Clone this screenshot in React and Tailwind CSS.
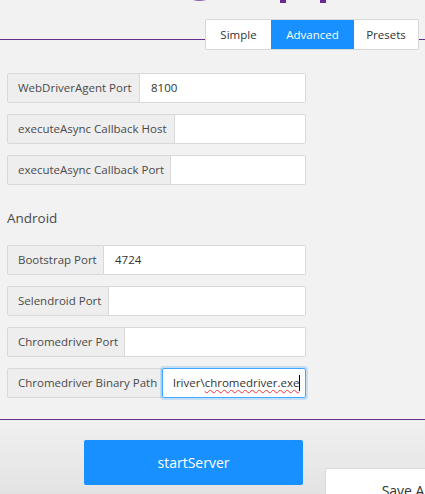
import React from 'react';

// Pestañas de modo
const tabs = [
  { name: 'Simple', w: 'w-[65px]', active: false },
  { name: 'Advanced', w: 'w-[83px]', active: true },
  { name: 'Presets', w: 'w-[64px]', active: false },
];

const iosRows = [
  { label: 'WebDriverAgent Port', w: 'w-[133px]', value: '8100' },
  { label: 'executeAsync Callback Host', w: 'w-[168px]', value: '' },
  { label: 'executeAsync Callback Port', w: 'w-[164px]', value: '' },
];

const androidRows = [
  { label: 'Bootstrap Port', w: 'w-[97px]', value: '4724' },
  { label: 'Selendroid Port', w: 'w-[102px]', value: '' },
  { label: 'Chromedriver Port', w: 'w-[118px]', value: '' },
];

const Row = ({ label, w, value }) => (
  <div className="flex h-[30px] w-[299px]">
    <div className={`${w} shrink-0 flex items-center px-[10px] bg-[#eeeeee] border border-[#d9d9d9] rounded-l-[2px] text-[#4a4a4a] whitespace-nowrap`}>
      {label}
    </div>
    <div className="flex-1 flex items-center px-[11px] bg-white border border-l-0 border-[#d9d9d9] rounded-r-[2px] text-[#333]">
      {value}
    </div>
  </div>
);

export default function App() {
  return (
    <div className="relative w-[425px] h-[494px] overflow-hidden bg-[#f2f2f2] font-['Open_Sans',sans-serif] text-[11.5px]">
      {/* restos del logo */}
      <svg className="absolute top-0 left-0" width="425" height="4" viewBox="0 0 425 4">
        <path d="M193 0 Q199 2.2 206 0 Z" fill="#8a5bb3" />
        <rect x="280" y="0" width="6" height="3" fill="#662d91" />
        <rect x="320" y="0" width="6" height="3" fill="#662d91" />
      </svg>

      <div className="h-[40px] border-b border-[#662d91]" />
      <div className="flex justify-end pr-[6px] -mt-[21px]">
        <div className="flex h-[31px] border border-[#d9d9d9] rounded-[2px] bg-white">
          {tabs.map((t) => (
            <div
              key={t.name}
              className={`${t.w} flex items-center justify-center ${t.active ? 'bg-[#1890ff] text-white' : 'text-[#333]'}`}
            >
              {t.name}
            </div>
          ))}
        </div>
      </div>

      <div className="pl-[7px] pt-[23px] flex flex-col gap-[11px] h-[369px]">
        {iosRows.map((r) => (
          <Row key={r.label} {...r} />
        ))}
        <div className="h-[20px] mt-[12px] mb-[6px] flex items-center text-[13.5px] text-[#4a4a4a]">Android</div>
        {androidRows.map((r) => (
          <Row key={r.label} {...r} />
        ))}
        <div className="flex h-[30px] w-[299px]">
          <div className="w-[155px] shrink-0 flex items-center px-[10px] bg-[#eeeeee] border border-[#d9d9d9] rounded-l-[2px] text-[#4a4a4a] whitespace-nowrap">
            Chromedriver Binary Path
          </div>
          <div className="flex-1 flex items-center pl-[10px] bg-white border border-[#40a9ff] rounded-[2px] shadow-[0_0_0_2px_rgba(24,144,255,0.2)] text-[#333] whitespace-nowrap overflow-hidden">
            <span>lriver\</span>
            <span className="underline decoration-wavy decoration-[#e33] decoration-1 underline-offset-2">chromedriver.exe</span>
            <span className="w-px h-[16px] bg-black" />
          </div>
        </div>
      </div>

      <div className="h-[76px] border-t border-[#662d91] bg-gradient-to-b from-[#f0f0f0] to-[#e3e3e3] flex items-start pt-[20px] pl-[84px]">
        <div className="w-[219px] h-[45px] shrink-0 flex items-center justify-center bg-[#1890ff] rounded-[2px] text-white text-[14px]">
          startServer
        </div>
        <div className="ml-[22px] mt-[28px] w-[219px] h-[45px] shrink-0 flex items-center justify-center bg-white border border-[#d9d9d9] rounded-[2px] text-[#333] text-[14px]">
          Save As Preset...
        </div>
      </div>
    </div>
  );
}
